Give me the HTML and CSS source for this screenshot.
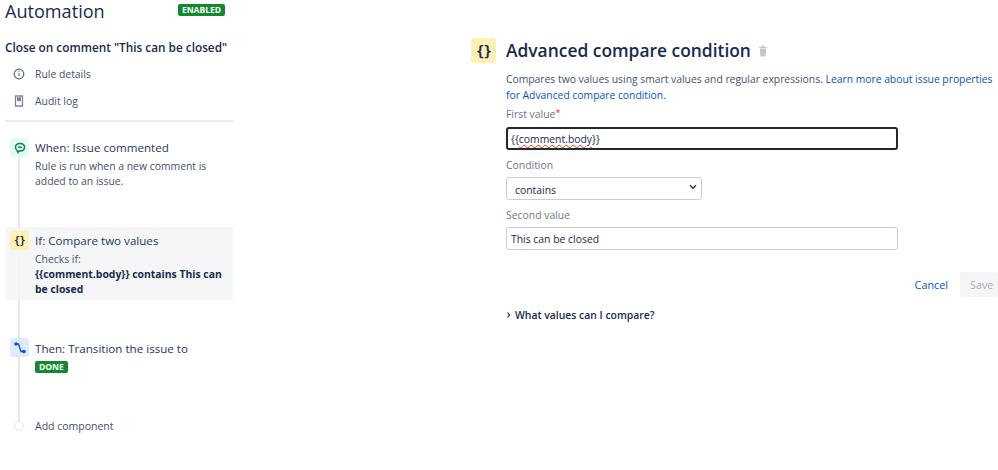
FILE: index.html
```html
<!DOCTYPE html>
<html lang="en">
<head>
  <meta charset="UTF-8" />
  <title>Automation</title>
  <link rel="stylesheet" href="styles.css">
</head>
<body>
  <div class="page">
    <div class="sidebar">
      <div class="top">
        <h1>Automation</h1>
        <span class="lozenge enabled">ENABLED</span>
      </div>
      <div class="rule-name">Close on comment "This can be closed"</div>
      <div class="nav-row">
        <svg class="nav-icon" width="14" height="14" viewBox="0 0 14 14" fill="none" stroke="#5e6c84" stroke-width="1.2"><circle cx="7" cy="7" r="4.800"/><path d="M7 6.300v3M7 4.300v1"/></svg>
        Rule details
      </div>
      <div class="nav-row">
        <svg class="nav-icon" width="14" height="14" viewBox="0 0 14 14"><path d="M3.500 2h7v10h-7z" fill="#fff" stroke="#7a869a" stroke-width="1.300"/><path d="M5 3.200h4v4H5z" fill="#7a869a"/></svg>
        Audit log
      </div>
      <hr class="divider">
      <div class="steps">
        <div class="line"></div>
        <div class="step step-when">
          <div class="step-icon green">
            <svg width="12" height="12" viewBox="0 0 12 12" fill="none" stroke="#00875a" stroke-width="1.500"><path d="M6 1.500c2.700 0 4.500 1.600 4.500 3.800S8.700 9 6 9H4.800L4 10.500 3 8.400C2 7.700 1.500 6.600 1.500 5.300 1.500 3.100 3.300 1.500 6 1.500z"/><path d="M4 5.200h4"/></svg>
          </div>
          <div class="step-text">
            <div class="step-title">When: Issue commented</div>
            <div class="step-desc">Rule is run when a new comment is added to an issue.</div>
          </div>
        </div>
        <div class="step step-if">
          <div class="step-icon yellow">{}</div>
          <div class="step-text">
            <div class="step-title">If: Compare two values</div>
            <div class="step-desc">Checks if:<br><b>{{comment.body}} contains This can be closed</b></div>
          </div>
        </div>
        <div class="step step-then">
          <div class="step-icon blue">
            <svg width="12" height="12" viewBox="0 0 12 12" fill="none" stroke="#0052cc" stroke-width="1.300"><path d="M2 2h2.500l2.500 7.500h3"/><circle cx="2" cy="2" r="1.100" fill="#0052cc"/><circle cx="10" cy="9.500" r="1.100" fill="#0052cc"/></svg>
          </div>
          <div class="step-text">
            <div class="step-title">Then: Transition the issue to</div>
            <span class="lozenge done">DONE</span>
          </div>
        </div>
        <div class="step step-add">
          <div class="add-dot"></div>
          <div class="add-label">Add component</div>
        </div>
      </div>
    </div>

    <div class="main">
      <div class="heading">
        <div class="big-icon">{}</div>
        <h2>Advanced compare condition</h2>
        <svg class="trash" width="10" height="12" viewBox="0 0 10 12"><path d="M1 2h8v1H1zM3.500 .8h3V2h-3zM1.800 3.500h6.400L7.600 11.500H2.400z" fill="#c1c7d0"/></svg>
      </div>
      <div class="form">
        <p class="desc">Compares two values using smart values and regular expressions. <a href="#">Learn more about issue properties for Advanced compare condition.</a></p>
        <label class="label first">First value<span class="req">*</span></label>
        <div class="input focused">{{<span class="squiggle">comment.body</span>}}</div>
        <label class="label">Condition</label>
        <div class="select-wrap">
          <select class="select"><option>contains</option></select>
          <svg class="chevron" width="8" height="6" viewBox="0 0 8 6" fill="none" stroke="#253858" stroke-width="1.500"><path d="M1 1.200l3 3 3-3"/></svg>
        </div>
        <label class="label">Second value</label>
        <input class="input" type="text" value="This can be closed">
        <div class="actions">
          <a class="cancel" href="#">Cancel</a>
          <button class="save" disabled>Save</button>
        </div>
        <div class="expand">
          <svg width="6" height="8" viewBox="0 0 6 8" fill="none" stroke="#172b4d" stroke-width="1.200"><path d="M1.500 1.500l2 2.500-2 2.500"/></svg>
          What values can I compare?
        </div>
      </div>
    </div>
  </div>
</body>
</html>
```

FILE: styles.css
```css
* {
  box-sizing: border-box;
  margin: 0;
  padding: 0;
}
body {
  overflow: hidden;
  width: 998px;
  height: 470px;
  background: #fff;
  color: #172b4d;
  font-family: "Open Sans", "Noto Sans", Arial, sans-serif;
  font-size: 10.400px;
}
.page {
  display: flex;
  height: 470px;
}
.sidebar {
  width: 228px;
  margin-left: 5px;
  flex-shrink: 0;
}
.top {
  display: flex;
  justify-content: space-between;
  align-items: flex-start;
  height: 38px;
  padding-right: 8px;
}
h1 {
  font-size: 18.100px;
  font-weight: 400;
  line-height: 23px;
}
.lozenge {
  display: inline-block;
  border-radius: 2px;
  background: #118a2f;
  color: #fff;
  font-size: 8.500px;
  font-weight: 700;
  line-height: 12px;
  padding: 0 4px;
}
.enabled { margin-top: 4px; }
.rule-name {
  font-size: 11.800px;
  font-weight: 600;
  line-height: 18px;
  margin-bottom: 4px;
  white-space: nowrap;
}
.nav-row {
  display: flex;
  align-items: center;
  height: 27px;
  padding-left: 7px;
  gap: 9px;
  color: #42526e;
}
.nav-icon { flex-shrink: 0; }
.divider {
  border: 0;
  height: 2px;
  background: #ebecf0;
  margin-top: 6px;
}
.steps {
  position: relative;
  padding-top: 12px;
}
.line {
  position: absolute;
  left: 13px;
  top: 30px;
  width: 2px;
  height: 270px;
  background: #e4e6f0;
}
.step {
  position: relative;
  display: flex;
  gap: 6px;
  padding: 4px 5px;
}
.step-when { height: 93px; }
.step-if {
  height: 73px;
  background: rgba(244, 245, 247, 0.92);
  border-radius: 3px;
  margin-bottom: 34px;
}
.step-then { height: 84px; }
.step-icon {
  width: 19px;
  height: 19px;
  flex-shrink: 0;
  border-radius: 3px;
  display: flex;
  align-items: center;
  justify-content: center;
  font-family: "DejaVu Sans Mono", monospace;
  font-size: 10px;
  font-weight: 700;
  letter-spacing: -0.5px;
}
.green { background: #e3fcef; }
.yellow { background: #fff0b3; }
.blue { background: #deebff; }
.step-title {
  color: #253858;
  font-size: 11.600px;
  line-height: 20px;
}
.step-then .step-title { padding-top: 1px; }
.step-desc {
  color: #42526e;
  line-height: 15px;
  padding-top: 1px;
}
.step-desc b {
  color: #172b4d;
  font-weight: 700;
}
.done { margin-top: 2px; }
.step-add {
  align-items: center;
  padding: 0 0 0 9px;
  gap: 11px;
}
.add-dot {
  width: 10px;
  height: 10px;
  border-radius: 50%;
  border: 1.500px solid #e4e6f0;
  background: #fff;
}
.add-label {
  color: #42526e;
  font-size: 10.500px;
  line-height: 16px;
}
.main {
  margin-left: 238px;
  padding-top: 38px;
  flex-grow: 1;
}
.heading {
  display: flex;
  align-items: center;
  height: 25px;
}
.big-icon {
  width: 25px;
  height: 25px;
  border-radius: 3px;
  background: #fff0b3;
  display: flex;
  align-items: center;
  justify-content: center;
  font-family: "DejaVu Sans Mono", monospace;
  font-size: 14px;
  font-weight: 700;
  letter-spacing: -1px;
}
h2 {
  font-size: 17.400px;
  font-weight: 600;
  margin-left: 10px;
  line-height: 25px;
}
.trash { margin-left: 7px; }
.form {
  margin-left: 35px;
  padding-top: 8px;
}
.desc {
  width: 492px;
  color: #42526e;
  font-size: 10.330px;
  line-height: 16px;
}
.desc a, .cancel {
  color: #0052cc;
  text-decoration: none;
}
.label {
  display: block;
  color: #6b778c;
  line-height: 15px;
  margin: 8px 0 4px;
}
.label.first { margin-top: 4px; margin-bottom: 5px; }
.req { color: #de350b; vertical-align: 2px; font-size: 9px; line-height: 0; }
.input {
  display: block;
  width: 392px;
  height: 23px;
  border: 1px solid #c9ccd3;
  border-radius: 3px;
  background: #fff;
  color: #172b4d;
  font: inherit;
  line-height: 21px;
  padding: 0 4px;
}
.focused {
  border: 2px solid #24272c;
  line-height: 20px;
  padding: 0 3px;
}
.squiggle {
  text-decoration: underline wavy #de350b 1px;
}
.select-wrap {
  position: relative;
  width: 196px;
}
.select {
  display: block;
  width: 100%;
  height: 23px;
  border: 1px solid #c9ccd3;
  border-radius: 3px;
  background-color: #fff;
  color: #172b4d;
  font: inherit;
  padding: 3px 0 0 8px;
  appearance: none;
}
.chevron {
  position: absolute;
  right: 5px;
  top: 7px;
  pointer-events: none;
}
.actions {
  display: flex;
  justify-content: flex-end;
  align-items: center;
  gap: 12px;
  margin-top: 22px;
  width: 492px;
}
.cancel { font-size: 10.800px; }
.save {
  width: 38px;
  height: 25px;
  flex-shrink: 0;
  border: 0;
  border-radius: 3px;
  background: #f4f5f7;
  color: #a5adba;
  font: inherit;
  font-size: 10.800px;
  text-align: left;
  padding-left: 10px;
}
.expand {
  display: flex;
  align-items: center;
  gap: 3px;
  margin-top: 10px;
  font-weight: 600;
  line-height: 16px;
}
```
